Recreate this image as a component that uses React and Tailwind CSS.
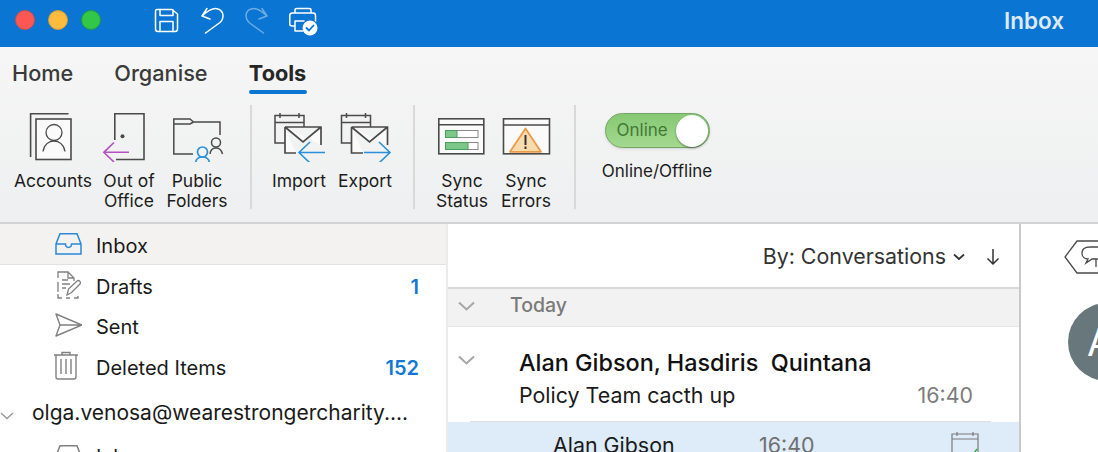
import React from "react";

const gray = "#4a4a4a";
const blue = "#2b90d9";

const AccountsIcon = () => (
	<svg width="78" height="52" viewBox="14 110 78 52" fill="none" stroke={gray} strokeWidth="1.6">
		<path d="M68.5 113.8H30.6V157" />
		<rect x="36" y="119" width="35" height="40.5" fill="#fafafa" />
		<circle cx="54" cy="132.5" r="8" strokeWidth="1.3" />
		<path d="M43 151.5c1-7 6-10.500 11-10.500s10 3.500 11 10.500" strokeWidth="1.3" />
	</svg>
);

const OutOfOfficeIcon = () => (
	<svg width="74" height="52" viewBox="92 110 74 52" fill="none" strokeWidth="1.6">
		<path d="M114.800 140V113.800H144V159.500H116" stroke={gray} fill="none" />
		<circle cx="122.500" cy="136.300" r="2" fill={gray} />
		<path d="M129 152.300H104M114 142.500L103.800 152.300L114 162" stroke="#b44fc4" />
	</svg>
);

const PublicFoldersIcon = () => (
	<svg width="62" height="52" viewBox="166 110 62 52" fill="none" strokeWidth="1.5">
		<path d="M193 154H173.800V119H190L193.500 122H220V135M173.800 124H190L193.500 122" stroke={gray} />
		<circle cx="216" cy="142.500" r="4.500" stroke={gray} />
		<path d="M210 154c.5-4 3-6 6-6s5.500 2 6.500 6" stroke={gray} />
		<circle cx="202.500" cy="152" r="5" stroke={blue} strokeWidth="1.700" />
		<path d="M195.500 163c.5-4 3-6 7-6s6.500 2 7 6" stroke={blue} strokeWidth="1.700" />
	</svg>
);

const ImportIcon = () => (
	<svg width="66" height="52" viewBox="266 110 66 52" fill="none" strokeWidth="1.5">
		<path d="M285 143H275V115.500H304V127M275 122.500H304M280 113V118M299 113V118" stroke={gray} />
		<path d="M285 127H321V145M285 127V153H296M285 127L303 142L321 127" stroke={gray} strokeWidth="1.700" fill="#fafafa" />
		<path d="M325 152.500H300M310 142L299 152.500L310 163" stroke={blue} strokeWidth="1.600" />
	</svg>
);

const ExportIcon = () => (
	<svg width="66" height="52" viewBox="332 110 66 52" fill="none" strokeWidth="1.5">
		<path d="M351.500 143H341.500V115.500H370.500V127M341.500 122.500H370.500M346.500 113V118M365.500 113V118" stroke={gray} />
		<path d="M351.500 127H387.500V145M351.500 127V153H363M351.500 127L369.500 142L387.500 127" stroke={gray} strokeWidth="1.700" fill="#fafafa" />
		<path d="M364 152.500H389M379 142L390 152.500L379 163" stroke={blue} strokeWidth="1.600" />
	</svg>
);

const SyncStatusIcon = () => (
	<svg width="64" height="52" viewBox="430 110 64 52" fill="none">
		<rect x="438.800" y="118.800" width="45" height="35" fill="#fafafa" stroke={gray} strokeWidth="1.600" />
		<path d="M438.800 124.800H483.800" stroke={gray} strokeWidth="1.600" />
		<rect x="445.500" y="130.500" width="32.500" height="7" fill="#fff" stroke="#8a8a8a" />
		<rect x="445.500" y="130.500" width="11.500" height="7" fill="#7cc68a" stroke="#4f9c61" />
		<rect x="445.500" y="142.500" width="32.500" height="7" fill="#fff" stroke="#8a8a8a" />
		<rect x="445.500" y="142.500" width="22.500" height="7" fill="#7cc68a" stroke="#4f9c61" />
	</svg>
);

const SyncErrorsIcon = () => (
	<svg width="64" height="52" viewBox="494 110 64 52" fill="none">
		<rect x="503.500" y="118.800" width="46" height="35" fill="#fafafa" stroke={gray} strokeWidth="1.600" />
		<path d="M503.500 125H549.500" stroke={gray} strokeWidth="1.600" />
		<path d="M525.500 128.500L541 151.800H510Z" fill="#f8dcae" stroke="#ee9a45" strokeWidth="1.800" strokeLinejoin="round" />
		<path d="M525.500 135V145M525.500 146.500V149" stroke="#333" strokeWidth="2" />
	</svg>
);

const InboxIcon = () => (
	<svg width="28" height="24" viewBox="54 232 28 24" fill="none" stroke="#2b88d8" strokeWidth="1.500">
		<path d="M56 254V244L60 233.800H77L81 244V254ZM56 244H65.500C65.500 248.500 71.500 248.500 71.500 244H81" />
	</svg>
);

const DraftsIcon = () => (
	<svg width="28" height="30" viewBox="54 270 28 30" fill="none" stroke="#808080" strokeWidth="1.300">
		<path d="M58 278V272H68L74 278V281M68 272V278H74M58 282V292M58 294V298H62M66 298H70M74 298H78V296" />
		<path d="M62 280H68M62 284H70M62 288H66" />
		<path d="M67 295L68.500 289L77 281C79 279.500 81.500 282 80 284L71.500 292.500Z" />
	</svg>
);

const SentIcon = () => (
	<svg width="28" height="26" viewBox="54 313 28 26" fill="none" stroke="#808080" strokeWidth="1.400" strokeLinejoin="round">
		<path d="M56 315L82 326L56 337L60 326ZM60 326H82" />
	</svg>
);

const DeletedIcon = () => (
	<svg width="26" height="30" viewBox="56 351 26 30" fill="none" stroke="#808080" strokeWidth="1.400">
		<path d="M56 355H80M64 355V352.500H72V355M58 355V377C58 378 59 379 60 379H76C77 379 78 378 78 377V355M63 359V374M68 359V374M73 359V374" />
	</svg>
);

const RibbonButton = ({ width, icon, lines }) => (
	<div className="flex flex-col items-center" style={{ width }}>
		{icon}
		<div className="mt-[9px] text-center text-[17.500px] leading-[20px] text-[#1c1c1c] whitespace-nowrap">
			{lines.map((l) => <div key={l}>{l}</div>)}
		</div>
	</div>
);

const Sep = () => <div className="w-[2px] h-[104px] mt-[1px] bg-[#d9d9d9] shrink-0" />;

const FolderRow = ({ icon, label, count, active }) => (
	<div className={"flex items-center h-[40.500px] pr-[27px] text-[20px] text-[#1a1a1a] " + (active ? "bg-[#f3f2f1] border-b border-[#e4e2e2]" : "")}>
		<div className="w-[96px] flex justify-start pl-[54px] shrink-0">{icon}</div>
		<span className="mt-[4px]">{label}</span>
		{count && <span className="ml-auto mt-[4px] font-semibold text-[#0f78d4]">{count}</span>}
	</div>
);

const App = () => {
	return (
		<div className="w-[1098px] h-[452px] overflow-hidden flex flex-col bg-white" style={{ fontFamily: "Inter, 'Noto Sans', sans-serif" }}>
			{/* title bar */}
			<div className="h-[47px] shrink-0 bg-[#0a75d2] flex items-center pl-[15px] pr-[34px]">
				<div className="flex gap-[13px] mb-[7px]">
					<div className="w-[20px] h-[20px] rounded-full bg-[#fc5753] border border-[#c8504c]" />
					<div className="w-[20px] h-[20px] rounded-full bg-[#fdbc40] border border-[#d19a35]" />
					<div className="w-[20px] h-[20px] rounded-full bg-[#33c748] border border-[#27983a]" />
				</div>
				<svg className="ml-[52px] mb-[5px]" width="166" height="32" viewBox="153 5 166 32" fill="none" stroke="#fff" strokeWidth="1.500" strokeLinecap="round" strokeLinejoin="round">
					<path d="M157 9.500H172L177.500 14V29C177.500 30.500 176.500 31.500 175 31.500H158C156.500 31.500 155.500 30.500 155.500 29V11C155.500 10 156 9.500 157 9.500Z" />
					<path d="M160 9.500V15.500H173V10M160 31.500V21.500H173V31.500" />
					<path d="M207 8.500L202 16L210 19M202 16C208 10.500 214 7.500 218 9C224 11 224.500 18 220 22.500L205.500 33" />
					<path opacity="0.4" d="M262 8.500L267 16L259 19M267 16C261 10.500 255 7.500 251 9C245 11 244.500 18 249 22.500L263.500 33" />
					<path d="M295 13V10C295 9 296 8.500 297 8.500H309C310 8.500 311 9 311 10V13M295 26H292C290.500 26 289.800 25 289.800 24V15.500C289.800 14 291 13 292.500 13H313C314.500 13 315.500 14 315.500 15.500V21M295 21H304M295 21V31H303" />
					<circle cx="310" cy="28" r="7.500" fill="#fff" stroke="none" />
					<path d="M306.500 28L309 30.500L313.500 25.500" stroke="#0a75d2" strokeWidth="1.800" />
				</svg>
				<span className="ml-auto text-[22.500px] font-semibold text-[#dce9f6] mb-[5px]">Inbox</span>
			</div>

			{/* ribbon */}
			<div className="h-[177px] shrink-0 bg-gradient-to-b from-[#f6f6f6] to-[#eeeff0] border-b-2 border-[#d2d2d2]">
				<div className="flex pl-[12px] pt-[10px] gap-[41px] text-[21.700px] leading-[33px] font-medium text-[#3a3a3a]">
					<span>Home</span>
					<span>Organise</span>
					<div className="flex flex-col items-center">
						<span className="font-bold text-[#262626]">Tools</span>
						<div className="w-[58px] h-[4px] rounded-full bg-[#0a75d2]" />
					</div>
				</div>
				<div className="flex mt-[10px]">
					<div className="flex ml-[14px] mr-[22px] pt-[6px]">
						<RibbonButton width={78} icon={<AccountsIcon />} lines={["Accounts"]} />
						<RibbonButton width={74} icon={<OutOfOfficeIcon />} lines={["Out of", "Office"]} />
						<RibbonButton width={62} icon={<PublicFoldersIcon />} lines={["Public", "Folders"]} />
					</div>
					<Sep />
					<div className="flex ml-[14px] mr-[15px] pt-[6px]">
						<RibbonButton width={66} icon={<ImportIcon />} lines={["Import"]} />
						<RibbonButton width={66} icon={<ExportIcon />} lines={["Export"]} />
					</div>
					<Sep />
					<div className="flex ml-[15px] mr-[16px] pt-[6px]">
						<RibbonButton width={64} icon={<SyncStatusIcon />} lines={["Sync", "Status"]} />
						<RibbonButton width={64} icon={<SyncErrorsIcon />} lines={["Sync", "Errors"]} />
					</div>
					<Sep />
					<div className="flex flex-col items-center ml-[24px] w-[114px] pt-[9px]">
						<div className="w-[105px] h-[35px] rounded-full bg-gradient-to-b from-[#86c874] to-[#a4d98f] border border-[#74a566] flex items-center pl-[11px] pr-[1px] shadow-sm">
							<span className="text-[17px] text-[#3f7a35]">Online</span>
							<div className="ml-auto w-[32px] h-[32px] rounded-full bg-white shadow-[0_1px_2px_rgba(0,0,0,0.4)]" />
						</div>
						<div className="mt-[13px] text-[17px] leading-[20px] text-[#1c1c1c] whitespace-nowrap">Online/Offline</div>
					</div>
				</div>
			</div>

			<div className="flex flex-1 min-h-0">
				{/* folders */}
				<div className="w-[448px] shrink-0 border-r-2 border-[#ebebeb] overflow-hidden">
					<FolderRow active icon={<InboxIcon />} label="Inbox" />
					<FolderRow icon={<DraftsIcon />} label="Drafts" count="1" />
					<FolderRow icon={<SentIcon />} label="Sent" />
					<FolderRow icon={<DeletedIcon />} label="Deleted Items" count="152" />
					<div className="flex items-center h-[52px] mt-[1px] text-[21px] text-[#1a1a1a]">
						<svg className="shrink-0 mt-[6px]" width="32" height="12" viewBox="0 0 32 12" fill="none" stroke="#9a9a9a" strokeWidth="1.500">
							<path d="M1 3L7 8.500L13 3" />
						</svg>
						<span className="whitespace-nowrap">olga.venosa@wearestrongercharity....</span>
					</div>
					<div className="flex items-start h-[40px] text-[20px] leading-[30px] text-[#1a1a1a]">
						<div className="w-[96px] pl-[54px] pt-[5px] shrink-0">
							<svg width="28" height="24" viewBox="54 232 28 24" fill="none" stroke="#808080" strokeWidth="1.500">
								<path d="M56 254V244L60 233.800H77L81 244V254ZM56 244H65.500C65.500 248.500 71.500 248.500 71.500 244H81" />
							</svg>
						</div>
						<span className="mt-[3px]">Inbox</span>
					</div>
				</div>

				{/* message list */}
				<div className="w-[573px] shrink-0 border-r-2 border-[#c9c9c9] overflow-hidden">
					<div className="h-[65px] flex items-center justify-end pr-[18px] pt-[2px] border-b-2 border-[#d8d8d8] text-[#333]">
						<span className="text-[21.400px]">By: Conversations</span>
						<svg className="ml-[6px]" width="14" height="10" viewBox="0 0 14 10" fill="none" stroke="#333" strokeWidth="1.800">
							<path d="M2 2.500L7 7L12 2.500" />
						</svg>
						<svg className="ml-[19px]" width="16" height="20" viewBox="0 0 16 20" fill="none" stroke="#333" strokeWidth="1.500">
							<path d="M8 2V17M2.500 11.500L8 17L13.500 11.500" />
						</svg>
					</div>
					<div className="h-[38px] flex items-center pb-[4px] bg-[#f2f2f2] border-b border-[#e6e6e6] text-[19.500px] font-medium text-[#7a7a7a]">
						<svg className="ml-[9px] mr-[34px]" width="19" height="12" viewBox="0 0 19 12" fill="none" stroke="#a6a6a6" strokeWidth="2">
							<path d="M2 2.500L9.500 9.500L17 2.500" />
						</svg>
						<span>Today</span>
					</div>
					<div className="relative pl-[71px] pt-[21px] h-[95px]">
						<svg className="absolute left-[9px] top-[27px]" width="19" height="12" viewBox="0 0 19 12" fill="none" stroke="#a6a6a6" strokeWidth="2">
							<path d="M2 2.500L9.500 9.500L17 2.500" />
						</svg>
						<div className="text-[23.400px] leading-[30px] font-medium text-[#111] whitespace-pre">Alan Gibson, Hasdiris  Quintana</div>
						<div className="flex items-center mt-[2px] pr-[46px] text-[21.400px] leading-[30px] text-[#1a1a1a]">
							<span>Policy Team cacth up</span>
							<span className="ml-auto text-[#7c7c7c]">16:40</span>
						</div>
						<div className="absolute left-[22px] right-[28px] bottom-0 h-px bg-[#dedede]" />
					</div>
					<div className="h-[40px] bg-[#deebf8] flex items-start pt-[9px] pl-[105px] text-[21.400px] leading-[28px] text-[#1a1a1a]">
						<span className="w-[206px]">Alan Gibson</span>
						<span className="text-[#6f6f6f]">16:40</span>
						<svg className="ml-[137px]" width="28" height="26" viewBox="0 0 28 26" fill="none" stroke="#7a7a7a" strokeWidth="1.200">
							<path d="M1 26V3H27V26M1 8H27M6 1V5M22 1V5" />
							<path d="M18 22L21 25L26 18" stroke="#30b04a" strokeWidth="1.500" />
						</svg>
					</div>
				</div>

				{/* reading pane */}
				<div className="flex-1 min-w-0 overflow-hidden pl-[43px] pt-[16px]">
					<svg width="36" height="36" viewBox="0 0 36 36" fill="none" stroke="#4a4a4a" strokeWidth="1.300">
						<path d="M36 1H13L1 17L13 33H36" />
						<path d="M36 7H26C21 7 18 9 18 13C18 17 21 19 24 19L22 23L28 19H36M32 19V27" />
					</svg>
					<div className="w-[78px] h-[78px] ml-[4px] mt-[27px] rounded-full bg-[#68777c] flex items-center justify-center text-[38px] text-white pr-[14px]">A</div>
				</div>
			</div>
		</div>
	);
};

export default App;
